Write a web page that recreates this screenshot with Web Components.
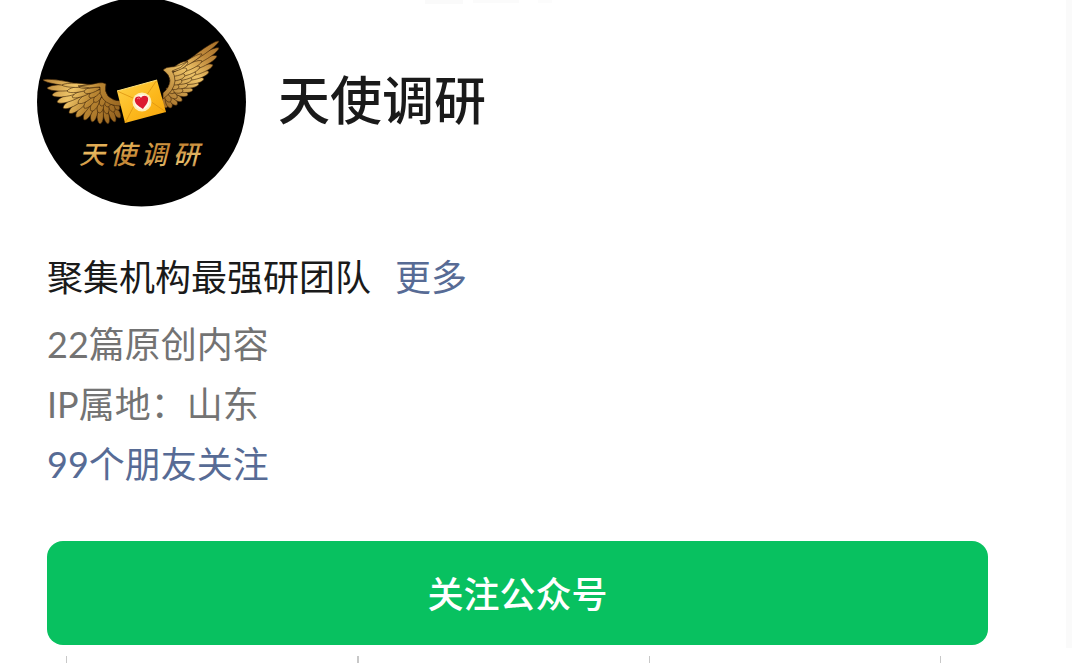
<!DOCTYPE html>
<html lang="zh-CN">
<head>
<meta charset="utf-8">
<meta name="viewport" content="width=device-width, initial-scale=1">
<title>天使调研</title>
<style>
  body { margin: 0; background: #fff; color: #1a1a1a; font-family: "Noto Sans CJK SC", sans-serif; overflow-x: hidden; }
</style>
</head>
<body>
<account-page>
  <account-header slot="header" name="天使调研"></account-header>
  <account-facts slot="facts">
    <span slot="intro">聚集机构最强研团队</span>
    <span slot="originals">22篇原创内容</span>
    <span slot="region">IP属地：山东</span>
    <span slot="friends">99个朋友关注</span>
  </account-facts>
  <follow-button slot="action">关注公众号</follow-button>
</account-page>
<column-ticks></column-ticks>

<script>
class AccountPage extends HTMLElement {
  constructor() {
    super();
    this.attachShadow({ mode: 'open' }).innerHTML = `
      <style>
        :host { display: block; background: #fafafa; padding-right: 6px; }
        main {
          background:
            linear-gradient(#fafafa, #fafafa) 425px 0 / 38px 4px no-repeat,
            linear-gradient(#fbfbfb, #fbfbfb) 473px 0 / 46px 3px no-repeat,
            linear-gradient(#fcfcfc, #fcfcfc) 538px 0 / 14px 3px no-repeat,
            #fff;
          padding: 0 78px 3px 47px;
        }
      </style>
      <main>
        <slot name="header"></slot>
        <slot name="facts"></slot>
        <slot name="action"></slot>
      </main>`;
  }
}

class AccountHeader extends HTMLElement {
  constructor() {
    super();
    this.attachShadow({ mode: 'open' }).innerHTML = `
      <style>
        :host { display: flex; gap: 32px; margin-left: -10px; }
        h1 { margin: 0; padding-top: 58px; font-size: 52px; line-height: 80px; font-weight: 500; white-space: nowrap; }
      </style>
      <account-avatar></account-avatar>
      <h1></h1>`;
    this.shadowRoot.querySelector('h1').textContent = this.getAttribute('name');
  }
}

/* Each feather: base x, base y, tip x, tip y, half width. Outer rows come first. */
const LEFT_WING = [
  [112,104,120,118,4],[108,104,115,122,4],[104,103,108,124,4],[101,102,100,124,4.5],
  [98,101,92,122,4.5],[96,100,84,120,4.5],[94,98,76,117,5],[92,96,69,113,5],
  [90,94,63,108,5],[88,92,57,102,5],[87,90,52,95,5],[86,88,47,88,4.5],[86,87,43,80,3],
  [112,99,119,110,4],[108,99,114,112,4],[105,98,107,114,4],[103,97,99,113,4.5],
  [101,95,91,111,4.5],[99,93,84,108,4.5],[98,91,78,103,4.5],[97,89,72,97,4],[96,87,67,91,4],[96,86,62,85,3],
  [110,98,114,105,3],[107,97,108,107,4],[105,95,101,106,4],[103,92,94,102,4],[102,90,89,97,4],[101,88,84,92,4],[102,86,79,87,2.5]
];
const RIGHT_WING = [
  [164,96,166,108,4],[166,96,171,108,4],[168,95,177,105,4],[170,93,182,101,4],
  [172,91,188,95,4],[174,89,193,90,4],[175,86,199,84,4.5],[177,83,204,79,4.5],
  [178,80,209,72,5],[179,77,213,65,5],[180,73,217,56,5],[181,70,219,48,4.5],[181,67,219,41,3.5],
  [165,92,170,102,4],[167,91,177,98,4],[169,89,183,91,4],[170,86,188,85,4.5],
  [171,83,192,79,4.5],[172,80,196,73,4.5],[173,77,200,67,4.5],[173,74,202,61,4],[173,71,202,54,3],
  [166,88,174,93,3],[168,86,179,87,4],[169,83,182,81,4],[169,80,185,75,4],[169,76,187,69,4],[169,72,188,62,4]
];

function feather([bx, by, tx, ty, half]) {
  const dx = tx - bx, dy = ty - by, length = Math.hypot(dx, dy);
  const nx = -dy / length * half, ny = dx / length * half;
  const at = (t, side) => `${(bx + dx * t + nx * side).toFixed(1)} ${(by + dy * t + ny * side).toFixed(1)}`;
  return `<path d="M${bx} ${by}C${at(.3, 1)} ${at(.9, 1)} ${tx} ${ty}C${at(.95, -.8)} ${at(.5, -1)} ${bx} ${by}Z"/>`;
}

class AccountAvatar extends HTMLElement {
  constructor() {
    super();
    this.attachShadow({ mode: 'open' }).innerHTML = `
      <style>
        :host { display: block; flex: none; }
        svg { display: block; }
        text { font-family: "Noto Sans CJK SC", sans-serif; font-size: 26px; font-weight: 500; font-style: italic; }
      </style>
      <svg width="209" height="207" viewBox="37 0 209 207" role="img" aria-label="天使调研">
        <defs>
          <linearGradient id="left" gradientUnits="userSpaceOnUse" x1="45" y1="80" x2="118" y2="120">
            <stop offset="0" stop-color="#b9853a"/><stop offset=".35" stop-color="#efc568"/>
            <stop offset=".6" stop-color="#b98532"/><stop offset="1" stop-color="#94621f"/>
          </linearGradient>
          <linearGradient id="right" gradientUnits="userSpaceOnUse" x1="219" y1="42" x2="166" y2="106">
            <stop offset="0" stop-color="#a87028"/><stop offset=".25" stop-color="#c08a3c"/>
            <stop offset=".5" stop-color="#edc368"/><stop offset="1" stop-color="#a36f29"/>
          </linearGradient>
          <linearGradient id="paper" x1="0" y1="0" x2="1" y2="1">
            <stop offset="0" stop-color="#ffd34a"/><stop offset=".55" stop-color="#fcb81c"/><stop offset="1" stop-color="#f6a40c"/>
          </linearGradient>
          <linearGradient id="ink" x1="0" y1="0" x2="1" y2="1">
            <stop offset="0" stop-color="#c98836"/><stop offset=".3" stop-color="#e9b95f"/>
            <stop offset=".55" stop-color="#c28332"/><stop offset=".8" stop-color="#e5bd6c"/><stop offset="1" stop-color="#a9682a"/>
          </linearGradient>
        </defs>
        <circle cx="141.5" cy="102" r="104.5" fill="#000"/>
        <g fill="url(#left)" stroke="#3a2208" stroke-width=".6">
          ${LEFT_WING.map(feather).join('')}
          <path d="M78 86Q91 85 98 83Q103 82 106 84Q104 91 108 96Q113 101 120 101L121 106Q109 106 103 99Q99 94 100 87Q90 89 78 86Z"/>
        </g>
        <g fill="url(#right)" stroke="#3a2208" stroke-width=".6">
          ${RIGHT_WING.map(feather).join('')}
          <path d="M188 61Q178 67 171 67Q166 67 163 70Q169 74 170 80Q170 87 163 93L163 99Q174 91 175 81Q175 75 172 71Q181 69 188 61Z"/>
        </g>
        <path d="M117 91L157 80L166 112L125 123Z" fill="url(#paper)"/>
        <path d="M117 91L142 102L157 80M125 123L136 102M166 112L147 99" fill="none" stroke="#dd9310" stroke-width=".8"/>
        <path d="M117 91L157 80" stroke="#ffe27c"/>
        <circle cx="142" cy="102" r="9.5" fill="#ffeeb8"/>
        <circle cx="142" cy="102" r="7.5" fill="#fff8e9"/>
        <path d="M143 109C138 106 134 103 135 99C136 96 140 96 141 98C142 95 147 95 148 98C149 102 145 106 143 109Z" fill="#dc1930"/>
        <path d="M137 99Q138 97 140 99" fill="none" stroke="#f77786" stroke-width="1"/>
        <text x="79 110 141 173" y="164" fill="url(#ink)">天使调研</text>
      </svg>`;
  }
}

class AccountFacts extends HTMLElement {
  constructor() {
    super();
    this.attachShadow({ mode: 'open' }).innerHTML = `
      <style>
        :host { display: block; padding-top: 40px; font-family: Lato, "Noto Sans CJK SC", sans-serif; font-size: 36px; line-height: 60px; }
        p { margin: 0; color: #737373; }
        a { color: #576b95; text-decoration: none; }
        .intro { display: flex; gap: 24px; margin-bottom: 7px; color: #1a1a1a; }
      </style>
      <p class="intro"><slot name="intro"></slot><a href="#more">更多</a></p>
      <p><slot name="originals"></slot></p>
      <p><slot name="region"></slot></p>
      <p><a href="#friends"><slot name="friends"></slot></a></p>`;
  }
}

class FollowButton extends HTMLElement {
  constructor() {
    super();
    this.attachShadow({ mode: 'open' }).innerHTML = `
      <style>
        :host { display: block; padding-top: 47px; }
        button {
          display: block; width: 100%; height: 104px; padding: 0 0 2px; border: 0; border-radius: 16px;
          background: #08c160; color: #fff; font: 500 36px/54px "Noto Sans CJK SC", sans-serif; cursor: pointer;
        }
      </style>
      <button type="button"><slot></slot></button>`;
  }
}

class ColumnTicks extends HTMLElement {
  constructor() {
    super();
    this.attachShadow({ mode: 'open' }).innerHTML = `
      <style>
        :host { display: grid; grid-template-columns: 291fr 292fr 291fr 132fr; padding: 8px 0 0 66px; }
        i { height: 7px; border-left: 1px solid #c8c8c8; }
        i:nth-of-type(2) { border-left-width: 2px; }
      </style>
      <i></i><i></i><i></i><i></i>`;
  }
}

customElements.define('account-avatar', AccountAvatar);
customElements.define('account-header', AccountHeader);
customElements.define('account-facts', AccountFacts);
customElements.define('follow-button', FollowButton);
customElements.define('account-page', AccountPage);
customElements.define('column-ticks', ColumnTicks);
</script>
</body>
</html>
